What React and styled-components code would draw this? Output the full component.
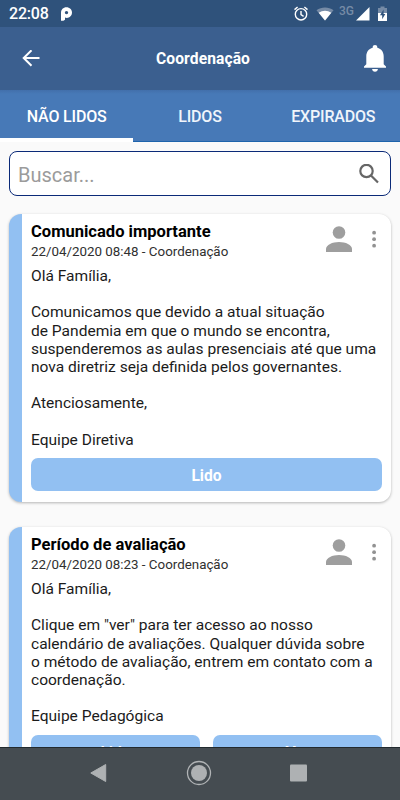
import React from 'react';
import styled, { createGlobalStyle } from 'styled-components';

const Global = createGlobalStyle`
  * { box-sizing: border-box; }
  body { margin: 0; background: #fafafa; font-family: Roboto, sans-serif; overflow: hidden; }
  button { font-family: inherit; border: 0; margin: 0; padding: 0; background: none; color: inherit; }
  svg { display: block; flex: none; }
`;

const Screen = styled.div`
  width: 400px;
  height: 800px;
  display: flex;
  flex-direction: column;
  overflow: hidden;
`;

const StatusBar = styled.div`
  height: 27px;
  flex: none;
  display: flex;
  align-items: center;
  justify-content: space-between;
  padding: 0 13px 0 9px;
  background: #2f527b;
  color: #fff;
`;

const StatusGroup = styled.div`
  display: flex;
  align-items: center;
`;

const StatusIcon = styled.svg`
  margin-left: ${(p) => p.$space || 0}px;
`;

const Clock = styled.span`
  width: 51px;
  padding-top: 1px;
  font-size: 16px;
  line-height: 26px;
  font-weight: 500;
  letter-spacing: -0.2px;
`;

const Network = styled.span`
  width: 17px;
  margin: -6px 0 0 5px;
  font-size: 12px;
  line-height: 14px;
  font-weight: 500;
  color: #768ba6;
`;

const Header = styled.header`
  height: 63px;
  flex: none;
  display: grid;
  grid-template-columns: 56px 1fr 56px;
  align-items: center;
  background: #3b5f8f;
  color: #fff;
`;

const HeaderButton = styled.button`
  height: 48px;
  display: flex;
  align-items: center;
  padding-left: ${(p) => p.$inset}px;
`;

const HeaderTitle = styled.h1`
  margin: 0;
  padding-left: 6px;
  text-align: center;
  font-size: 15.6px;
  line-height: 20px;
  font-weight: 700;
  letter-spacing: 0.1px;
`;

const Tabs = styled.nav`
  height: 52px;
  flex: none;
  display: grid;
  grid-template-columns: repeat(3, 1fr);
  background: linear-gradient(#426fab, #4779b7 4px, #4779b7 51px, #1e64ac 51px);
`;

const Tab = styled.button`
  padding-top: 4px;
  border-bottom: 4px solid ${(p) => (p.$active ? '#fff' : 'transparent')};
  font-size: 16px;
  font-weight: 500;
  letter-spacing: -0.18px;
  white-space: nowrap;
  color: ${(p) => (p.$active ? '#fff' : '#f0f5fb')};
`;

const Content = styled.main`
  flex: 1;
  min-height: 0;
  overflow: hidden;
  padding: 9px 9px 0;
`;

const Search = styled.div`
  height: 45px;
  display: flex;
  align-items: center;
  justify-content: space-between;
  padding: 0 11px 0 8px;
  border: 1px solid #0b2a78;
  border-radius: 8px;
  background: #fff;
  color: #9b9b9b;
  font-size: 20px;
  line-height: 26px;
`;

const SearchHint = styled.span`
  padding-top: 2px;
`;

const Card = styled.article`
  height: ${(p) => p.$height}px;
  margin-top: ${(p) => p.$gap}px;
  padding: 7px 9px 0;
  border-left: 13px solid #92c0f2;
  border-radius: 12px;
  background: #fff;
  box-shadow: 0 1px 3px rgba(0, 0, 0, 0.28);
`;

const CardHead = styled.div`
  height: 46px;
  display: flex;
  justify-content: space-between;
`;

const CardTitle = styled.h2`
  margin: 0;
  padding-top: 1px;
  font-size: 16.55px;
  line-height: 20px;
  font-weight: 700;
  color: #000;
`;

const Meta = styled.div`
  margin-top: 1px;
  font-size: 13.35px;
  line-height: 18px;
  color: #303030;
`;

const CardActions = styled.div`
  display: flex;
  align-items: flex-start;
  gap: 20px;
  padding: 5px 6px 0 0;
`;

const Message = styled.div`
  padding-top: 0.15px;
  white-space: pre;
  font-size: 15.55px;
  line-height: 18.17px;
  color: #1b1b1b;
`;

const Buttons = styled.div`
  display: flex;
  gap: 13px;
  margin-top: 9px;
`;

const ReadButton = styled.button`
  flex: 1;
  height: 33px;
  padding-top: 3px;
  border-radius: 7px;
  background: #92c0f2;
  color: #fff;
  font-size: 15.6px;
  font-weight: 700;
`;

const NavBar = styled.footer`
  height: 53px;
  flex: none;
  display: flex;
  align-items: center;
  justify-content: center;
  gap: 78px;
  padding-bottom: 2px;
  border-top: 1px solid #222a2e;
  background: #454c51;
`;

const Person = () => (
  <svg width="26" height="27" viewBox="0 0 26 27" fill="#9e9e9e">
    <circle cx="13" cy="6.5" r="6.3" />
    <path d="M0 26v-3c0-4.2 6.5-7 13-7s13 2.8 13 7v3z" />
  </svg>
);

const More = () => (
  <svg width="4" height="28" viewBox="0 0 4 28" fill="#929292">
    <circle cx="2.1" cy="6.7" r="1.9" />
    <circle cx="2.1" cy="13.2" r="1.9" />
    <circle cx="2.1" cy="19.7" r="1.9" />
  </svg>
);

const Notice = ({ title, meta, message, actions, height, gap }) => (
  <Card $height={height} $gap={gap}>
    <CardHead>
      <div>
        <CardTitle>{title}</CardTitle>
        <Meta>{meta}</Meta>
      </div>
      <CardActions>
        <Person />
        <More />
      </CardActions>
    </CardHead>
    <Message>{message}</Message>
    <Buttons>
      {actions.map((label) => (
        <ReadButton key={label}>{label}</ReadButton>
      ))}
    </Buttons>
  </Card>
);

const first = `Olá Família,

Comunicamos que devido a atual situação
de Pandemia em que o mundo se encontra,
suspenderemos as aulas presenciais até que uma
nova diretriz seja definida pelos governantes.

Atenciosamente,

Equipe Diretiva`;

const second = `Olá Família,

Clique em "ver" para ter acesso ao nosso
calendário de avaliações. Qualquer dúvida sobre
o método de avaliação, entrem em contato com a
coordenação.

Equipe Pedagógica`;

export default function App() {
  return (
    <>
      <Global />
      <Screen>
        <StatusBar>
          <StatusGroup>
            <Clock>22:08</Clock>
            <svg width="13" height="14" viewBox="0 0 13 14">
              <path
                fill="#fff"
                fillRule="evenodd"
                d="M1 13.7V5.8C1 2.5 3.2.2 6.4.2S12 2.500 12 5.600s-2.300 5.300-5.200 5.300c-.7 0-1.300-.1-1.800-.3v2.200l-1.600.9zM6.500 3.900a1.700 1.700 0 1 0 0 3.400 1.700 1.700 0 1 0 0-3.400z"
              />
            </svg>
          </StatusGroup>
          <StatusGroup>
            <StatusIcon width="15" height="15" viewBox="0 0 15 15" fill="none" stroke="#fff" strokeWidth="1.4">
              <circle cx="8" cy="8.3" r="5.7" />
              <path d="M8 5v3.7l2.600 1.600M1.500 3.600 4.600 1M14.500 3.600 11.400 1" />
            </StatusIcon>
            <StatusIcon $space={8} width="18" height="14" viewBox="0 0 18 14">
              <path d="M9 13.500.5 3.200C5.500-.4 12.500-.4 17.500 3.200z" fill="#768ba6" />
              <path d="M9 13.500 2.700 5.800C6.500 3 11.500 3 15.300 5.800z" fill="#fff" />
            </StatusIcon>
            <Network>3G</Network>
            <StatusIcon width="14" height="14" viewBox="0 0 14 14">
              <path d="M0 13.500 13.500 0v13.500z" fill="#fff" />
            </StatusIcon>
            <StatusIcon $space={8} width="9" height="15" viewBox="0 0 9 15">
              <path d="M0 2h2.500V.5h4V2H9v5H0z" fill="#768ba6" />
              <path d="M0 7h9v8H0z" fill="#fff" />
              <path d="M5.600 3.500 2 9.300h2.200v3.900L7.300 8H5.600z" fill="#2f527b" />
            </StatusIcon>
          </StatusGroup>
        </StatusBar>
        <Header>
          <HeaderButton $inset={21} aria-label="Voltar">
            <svg width="19" height="18" viewBox="0 0 19 18" fill="none" stroke="#fff" strokeWidth="2">
              <path d="M18.500 8H2.500M10.500.3 2.700 8l7.800 7.700" />
            </svg>
          </HeaderButton>
          <HeaderTitle>Coordenação</HeaderTitle>
          <HeaderButton $inset={20} aria-label="Notificações">
            <svg width="22" height="27" viewBox="0 0 22 27" fill="#fff">
              <path d="M11 0c1.400 0 2.300.9 2.300 2.200v.6c4.100 1 6.400 4.300 6.400 8.700v7.800l2.300 2.200v1.200H0v-1.200l2.300-2.200v-7.800c0-4.400 2.300-7.700 6.400-8.700v-.6C8.700.9 9.600 0 11 0zM8.100 24h5.800c0 1.600-1.300 2.700-2.900 2.700S8.100 25.600 8.100 24z" />
            </svg>
          </HeaderButton>
        </Header>
        <Tabs>
          <Tab $active>NÃO LIDOS</Tab>
          <Tab>LIDOS</Tab>
          <Tab>EXPIRADOS</Tab>
        </Tabs>
        <Content>
          <Search>
            <SearchHint>Buscar...</SearchHint>
            <svg width="20" height="20" viewBox="0 0 20 20" fill="none" stroke="#666" strokeWidth="2.200">
              <circle cx="7.500" cy="7" r="6.200" />
              <path d="m12 11.500 7 7" />
            </svg>
          </Search>
          <Notice
            title="Comunicado importante"
            meta="22/04/2020 08:48 - Coordenação"
            message={first}
            actions={['Lido']}
            height={288}
            gap={18}
          />
          <Notice
            title="Período de avaliação"
            meta="22/04/2020 08:23 - Coordenação"
            message={second}
            actions={['Lido', 'Ver']}
            height={290}
            gap={25}
          />
        </Content>
        <NavBar>
          <svg width="18" height="20" viewBox="0 0 18 20">
            <path d="M.8 10 15.700 1.500v17z" fill="#aeb1b3" stroke="#aeb1b3" strokeLinejoin="round" />
          </svg>
          <svg width="26" height="26" viewBox="0 0 26 26">
            <circle cx="13" cy="13" r="11.500" fill="none" stroke="#b1b4b6" strokeWidth="1.300" />
            <circle cx="13" cy="13" r="8" fill="#aeb1b3" />
          </svg>
          <svg width="20" height="18" viewBox="1 0 20 18">
            <rect x="1" y=".5" width="17" height="17" rx="1" fill="#aeb1b3" />
          </svg>
        </NavBar>
      </Screen>
    </>
  );
}
